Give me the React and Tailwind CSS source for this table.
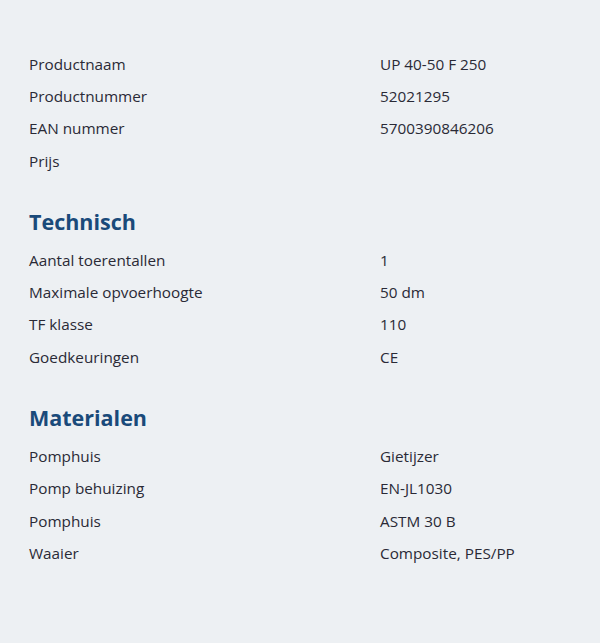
import React from 'react';

const sections = [
    {
        title: null,
        rows: [
            ['Productnaam', 'UP 40-50 F 250'],
            ['Productnummer', '52021295'],
            ['EAN nummer', '5700390846206'],
            ['Prijs', ''],
        ],
    },
    {
        title: 'Technisch',
        rows: [
            ['Aantal toerentallen', '1'],
            ['Maximale opvoerhoogte', '50 dm'],
            ['TF klasse', '110'],
            ['Goedkeuringen', 'CE'],
        ],
    },
    {
        title: 'Materialen',
        rows: [
            ['Pomphuis', 'Gietijzer'],
            ['Pomp behuizing', 'EN-JL1030'],
            ['Pomphuis', 'ASTM 30 B'],
            ['Waaier', 'Composite, PES/PP'],
        ],
    },
];

const App = () => {
    return (
        <div
            className="min-h-[643px] w-[600px] bg-[#edf0f3] pl-[29px] pt-[48px] text-[#2a2a36]"
            style={{ fontFamily: '"Open Sans", sans-serif' }}
        >
            {sections.map((section, i) => (
                <section key={i}>
                    {section.title && (
                        <h2 className="mt-[30px] mb-[7px] text-[21.5px] font-bold leading-[30px] text-[#1a4a7a]">
                            {section.title}
                        </h2>
                    )}
                    {section.rows.map(([label, value], j) => (
                        <div key={j} className="grid h-[32.3px] grid-cols-[351px_1fr] items-center text-[15.3px]">
                            <span>{label}</span>
                            <span>{value}</span>
                        </div>
                    ))}
                </section>
            ))}
        </div>
    );
};

export default App;
